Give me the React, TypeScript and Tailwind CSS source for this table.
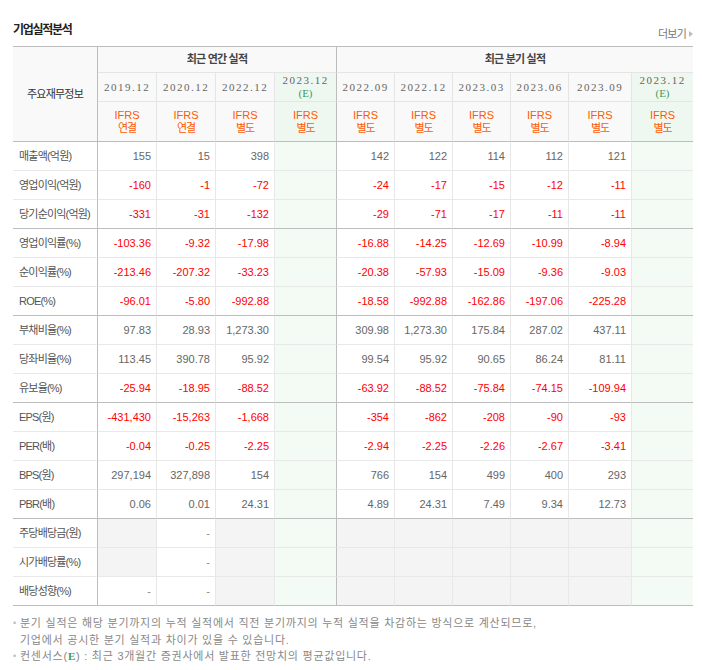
import React from "react";

type Val = string | null;

const annual = [
  { date: "2019.12", type: "연결", est: false },
  { date: "2020.12", type: "연결", est: false },
  { date: "2022.12", type: "별도", est: false },
  { date: "2023.12", type: "별도", est: true },
];

const quarter = [
  { date: "2022.09", type: "별도", est: false },
  { date: "2022.12", type: "별도", est: false },
  { date: "2023.03", type: "별도", est: false },
  { date: "2023.06", type: "별도", est: false },
  { date: "2023.09", type: "별도", est: false },
  { date: "2023.12", type: "별도", est: true },
];

const rows: { label: string; a: Val[]; q: Val[]; div?: boolean; end?: boolean }[] = [
  { label: "매출액(억원)", a: ["155", "15", "398"], q: ["142", "122", "114", "112", "121"] },
  { label: "영업이익(억원)", a: ["-160", "-1", "-72"], q: ["-24", "-17", "-15", "-12", "-11"] },
  { label: "당기순이익(억원)", a: ["-331", "-31", "-132"], q: ["-29", "-71", "-17", "-11", "-11"], end: true },
  { label: "영업이익률(%)", a: ["-103.36", "-9.32", "-17.98"], q: ["-16.88", "-14.25", "-12.69", "-10.99", "-8.94"] },
  { label: "순이익률(%)", a: ["-213.46", "-207.32", "-33.23"], q: ["-20.38", "-57.93", "-15.09", "-9.36", "-9.03"] },
  { label: "ROE(%)", a: ["-96.01", "-5.80", "-992.88"], q: ["-18.58", "-992.88", "-162.86", "-197.06", "-225.28"], end: true },
  { label: "부채비율(%)", a: ["97.83", "28.93", "1,273.30"], q: ["309.98", "1,273.30", "175.84", "287.02", "437.11"] },
  { label: "당좌비율(%)", a: ["113.45", "390.78", "95.92"], q: ["99.54", "95.92", "90.65", "86.24", "81.11"] },
  { label: "유보율(%)", a: ["-25.94", "-18.95", "-88.52"], q: ["-63.92", "-88.52", "-75.84", "-74.15", "-109.94"], end: true },
  { label: "EPS(원)", a: ["-431,430", "-15,263", "-1,668"], q: ["-354", "-862", "-208", "-90", "-93"] },
  { label: "PER(배)", a: ["-0.04", "-0.25", "-2.25"], q: ["-2.94", "-2.25", "-2.26", "-2.67", "-3.41"] },
  { label: "BPS(원)", a: ["297,194", "327,898", "154"], q: ["766", "154", "499", "400", "293"] },
  { label: "PBR(배)", a: ["0.06", "0.01", "24.31"], q: ["4.89", "24.31", "7.49", "9.34", "12.73"], end: true },
  { label: "주당배당금(원)", a: [null, "-", null], q: [null, null, null, null, null], div: true },
  { label: "시가배당률(%)", a: [null, "-", null], q: [null, null, null, null, null], div: true },
  { label: "배당성향(%)", a: ["-", "-", null], q: [null, null, null, null, null], div: true, end: true },
];

const ko = "font-['Liberation_Sans','Noto_Sans_CJK_KR',sans-serif]";

const DateCell = ({ date, est, last, strong }: { date: string; est: boolean; last?: boolean; strong?: boolean }) => (
  <div
    className={`flex flex-col items-center justify-center border-b border-[#e5e5e5] font-['Liberation_Serif',serif] text-[11px] leading-[13px] tracking-[1.5px] text-[#666] ${
      est ? "bg-[#eff8f0]" : "bg-[#f9f9f9]"
    } ${last ? "" : strong ? "border-r border-r-[#bdbdbd]" : "border-r border-r-[#e5e5e5]"}`}
  >
    <span>{date}</span>
    {est && <span className="text-[#3f9a5c] tracking-normal">(E)</span>}
  </div>
);

const TypeCell = ({ type, est, last, strong }: { type: string; est: boolean; last?: boolean; strong?: boolean }) => (
  <div
    className={`flex flex-col items-center justify-center border-b border-[#bdbdbd] ${ko} text-[11px] leading-[13px] text-[#ff5a00] ${
      est ? "bg-[#eff8f0]" : "bg-[#f9f9f9]"
    } ${last ? "" : strong ? "border-r border-r-[#bdbdbd]" : "border-r border-r-[#e5e5e5]"}`}
  >
    <span>IFRS</span>
    <span className="tracking-[-1px]">{type}</span>
  </div>
);

const ValCell = ({
  v,
  est,
  div,
  end,
  last,
  strong,
}: {
  v: Val;
  est?: boolean;
  div?: boolean;
  end?: boolean;
  last?: boolean;
  strong?: boolean;
}) => {
  const bg = est ? "bg-[#f3fbf4]" : div && v === null ? "bg-[#f4f4f4]" : "bg-white";
  const color = v && v.startsWith("-") && v !== "-" ? "text-[#ff0000]" : v === "-" ? "text-[#888]" : "text-[#666]";
  return (
    <div
      className={`flex items-center justify-end pr-[5px] font-['Liberation_Sans',sans-serif] text-[11px] ${bg} ${color} ${
        end ? "border-b border-b-[#bdbdbd]" : "border-b border-b-[#e8e8e8]"
      } ${last ? "" : strong ? "border-r border-r-[#bdbdbd]" : "border-r border-r-[#e8e8e8]"}`}
    >
      {v}
    </div>
  );
};

export default function App() {
  return (
    <div className="bg-white w-[702px] h-[670px] pl-[13px]">
      <div className="w-[680px]">
        {/* title */}
        <div className="flex h-[46px] items-end justify-between">
          <span className={`mb-[8px] ${ko} text-[12px] font-bold leading-[16px] tracking-[-1.3px] text-[#222]`}>
            기업실적분석
          </span>
          <span className={`mb-[5px] flex items-center gap-[3px] ${ko} text-[11px] leading-[14px] tracking-[-0.8px] text-[#777]`}>
            더보기
            <svg width="4" height="6" viewBox="0 0 4 6">
              <path d="M0 0 L4 3 L0 6 Z" fill="#bbb" />
            </svg>
          </span>
        </div>

        {/* table */}
        <div className="grid grid-cols-[85px_59px_59px_59px_62px_58px_58px_58px_58px_63px_61px] grid-rows-[26px_29px_40px] auto-rows-[29px] border-t border-[#bdbdbd]">
          <div
            className={`row-span-3 flex items-center justify-center border-r border-b border-[#bdbdbd] bg-[#f9f9f9] ${ko} text-[11px] tracking-[-0.8px] text-[#333]`}
          >
            주요재무정보
          </div>
          <div
            className={`col-span-4 flex items-center justify-center border-r border-r-[#bdbdbd] border-b border-b-[#e5e5e5] bg-[#f9f9f9] ${ko} text-[11px] font-bold tracking-[-0.8px] text-[#444]`}
          >
            최근 연간 실적
          </div>
          <div
            className={`col-span-6 flex items-center justify-center border-b border-b-[#e5e5e5] bg-[#f9f9f9] ${ko} text-[11px] font-bold tracking-[-0.8px] text-[#444]`}
          >
            최근 분기 실적
          </div>

          {annual.map((c, i) => (
            <DateCell key={"ad" + i} date={c.date} est={c.est} strong={i === 3} />
          ))}
          {quarter.map((c, i) => (
            <DateCell key={"qd" + i} date={c.date} est={c.est} last={i === 5} />
          ))}

          {annual.map((c, i) => (
            <TypeCell key={"at" + i} type={c.type} est={c.est} strong={i === 3} />
          ))}
          {quarter.map((c, i) => (
            <TypeCell key={"qt" + i} type={c.type} est={c.est} last={i === 5} />
          ))}

          {rows.map((r) => (
            <React.Fragment key={r.label}>
              <div
                className={`flex items-center pl-[6px] border-r border-r-[#bdbdbd] ${
                  r.end ? "border-b border-b-[#bdbdbd]" : "border-b border-b-[#e8e8e8]"
                } ${ko} text-[11px] tracking-[-0.8px] text-[#555]`}
              >
                {r.label}
              </div>
              {r.a.map((v, i) => (
                <ValCell key={"a" + i} v={v} div={r.div} end={r.end} />
              ))}
              <ValCell v={null} est end={r.end} strong />
              {r.q.map((v, i) => (
                <ValCell key={"q" + i} v={v} div={r.div} end={r.end} />
              ))}
              <ValCell v={null} est end={r.end} last />
            </React.Fragment>
          ))}
        </div>

        {/* notes */}
        <div className={`mt-[9px] ${ko} text-[11px] leading-[16.5px] tracking-[0.75px] text-[#888]`}>
          <div className="flex">
            <span className="w-[7px] text-[#bbb] text-[9px] tracking-normal">•</span>
            <div>
              <p>분기 실적은 해당 분기까지의 누적 실적에서 직전 분기까지의 누적 실적을 차감하는 방식으로 계산되므로,</p>
              <p>기업에서 공시한 분기 실적과 차이가 있을 수 있습니다.</p>
            </div>
          </div>
          <div className="flex">
            <span className="w-[7px] text-[#bbb] text-[9px] tracking-normal">•</span>
            <p>
              컨센서스(<span className="font-['Liberation_Serif',serif] font-bold text-[#3f9a5c]">E</span>) : 최근
              3개월간 증권사에서 발표한 전망치의 평균값입니다.
            </p>
          </div>
        </div>
      </div>
    </div>
  );
}
